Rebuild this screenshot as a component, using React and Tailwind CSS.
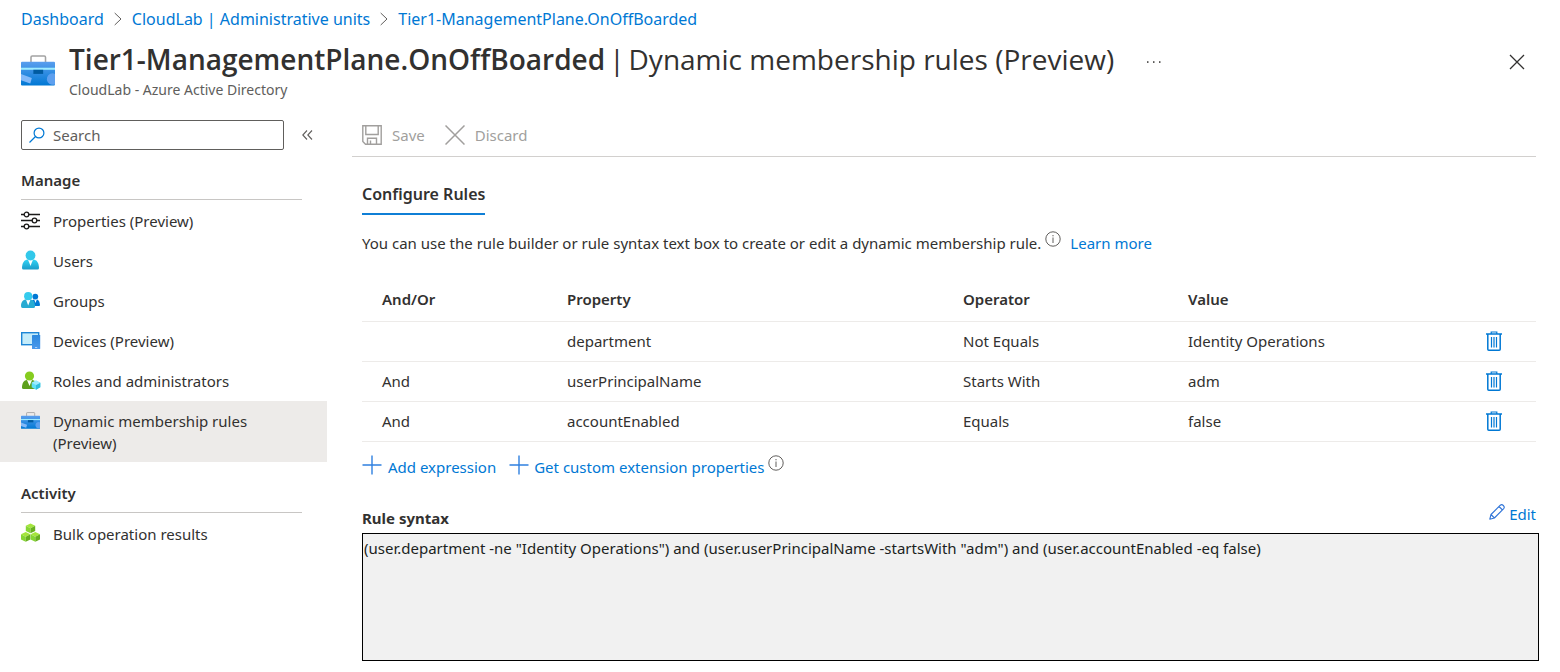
import React from 'react';

function Briefcase({ id, className }) {
  return (
    <svg className={className} viewBox="0 0 33 30" preserveAspectRatio="none" aria-hidden="true">
      <defs>
        <linearGradient id={id} x1="0" y1="0" x2="0" y2="1">
          <stop offset="0" stopColor="#5a9eee" />
          <stop offset="1" stopColor="#0078d4" />
        </linearGradient>
      </defs>
      <path d="M9.700 7V2.200A1.200 1.200 0 0 1 10.900 1H22.600A1.200 1.200 0 0 1 23.800 2.200V7" fill="none" stroke="#a3a3a3" strokeWidth="1.500" />
      <path d="M0 7.500A1 1 0 0 1 1 6.500H32A1 1 0 0 1 33 7.500V28.500A1 1 0 0 1 32 29.500H1A1 1 0 0 1 0 28.500Z" fill={`url(#${id})`} />
      <rect y="12.300" width="33" height="2" fill="#9cebff" />
      <rect x="12" y="14.300" width="9.500" height="4" fill="#005ba1" />
      <path d="M0 18.500L10.500 22.300L9 27.600L0 24.500Z" fill="#83b9f9" />
      <path d="M33 18.300A5.500 5.500 0 1 0 30 28.700H33Z" fill="#5ea0ef" />
    </svg>
  );
}

function PropertiesIcon() {
  return (
    <svg className="size-5" viewBox="0 0 20 20" fill="none" stroke="#1b1a19" strokeWidth="1.300" aria-hidden="true">
      <path d="M0 4.500H3M8 4.500H19M0 10.500H11M16 10.500H19M0 16.500H3M8 16.500H19" />
      <circle cx="5.500" cy="4.500" r="2.300" />
      <circle cx="13.500" cy="10.500" r="2.300" />
      <circle cx="5.500" cy="16.500" r="2.300" />
    </svg>
  );
}

function UserIcon() {
  return (
    <svg className="size-5" viewBox="0 0 20 20" aria-hidden="true">
      <defs>
        <linearGradient id="user" x1="0" y1="0" x2="0" y2="1">
          <stop offset="0" stopColor="#32d4f5" />
          <stop offset="1" stopColor="#1b9cc9" />
        </linearGradient>
      </defs>
      <path d="M1 18C1 13 3.500 9.500 6.500 9.500H12.500C15.500 9.500 18 13 18 18Q18 19.500 16.500 19.500H2.500Q1 19.500 1 18Z" fill="url(#user)" />
      <path d="M7 9.500H12L9.500 16Z" fill="#fff" />
      <circle cx="9.500" cy="5.500" r="4.900" fill="#32c8ea" />
    </svg>
  );
}

function GroupsIcon() {
  return (
    <svg className="size-5" viewBox="0 0 20 20" aria-hidden="true">
      <path d="M10 16V12Q11 9.500 13 9.500H16Q18.500 10 19 15Q19 16 18 16Z" fill="#0078d4" />
      <path d="M13 9H16L14.500 13Z" fill="#fff" />
      <circle cx="14.300" cy="6.600" r="2.900" fill="#0078d4" />
      <path d="M0 16C0 12 2 9.500 5 9.500H9.500C12.500 9.500 14 12.500 14 16.500Q14 18 12.500 18H1.500Q0 18 0 16Z" fill="#27abd2" />
      <path d="M5 9.500H9.500L7.200 15.500Z" fill="#fff" />
      <circle cx="7.200" cy="6.200" r="4.100" fill="#35cbed" />
    </svg>
  );
}

function DevicesIcon() {
  return (
    <svg className="size-5" viewBox="0 0 20 20" aria-hidden="true">
      <defs>
        <linearGradient id="phone" x1="0" y1="0" x2="0" y2="1">
          <stop offset="0" stopColor="#2b88de" />
          <stop offset="1" stopColor="#4a99ec" />
        </linearGradient>
      </defs>
      <rect x=".7" y="2.700" width="17" height="12" fill="#c5ecfa" stroke="#1d86d6" strokeWidth="1.400" />
      <rect x="11" y="5" width="8.200" height="14" rx=".6" fill="url(#phone)" />
      <rect x="14" y="17" width="2.200" height="1" fill="#a9d0f7" />
    </svg>
  );
}

function RolesIcon() {
  return (
    <svg className="size-5" viewBox="0 0 20 20" aria-hidden="true">
      <path d="M1 17.500C1 13 3 10 6 10H11C14 10 16 13 16 17.500Q16 19 14.500 19H2.500Q1 19 1 17.500Z" fill="#5da01c" />
      <path d="M6 10H11L8.500 16Z" fill="#fff" />
      <circle cx="8.500" cy="6" r="4.600" fill="#86cc1f" />
      <path d="M15 10.500L19.300 12.800V17.300L15 19.800L10.700 17.300V12.800Z" fill="#5fe0f7" />
      <path d="M15 15L19.300 12.800V17.300L15 19.800Z" fill="#32bedd" />
      <path d="M15 10.500L19.300 12.800L15 15L10.700 12.800Z" fill="#9cebff" />
    </svg>
  );
}

function Cube({ x, y }) {
  return (
    <g transform={`translate(${x} ${y})`}>
      <path d="M4.700 0L9.400 2.300L4.700 4.800L0 2.300Z" fill="#a4e53c" />
      <path d="M0 2.300L4.700 4.800V9.800L0 7.400Z" fill="#86d633" />
      <path d="M9.400 2.300L4.700 4.800V9.800L9.400 7.400Z" fill="#67b01f" />
    </g>
  );
}

function CubesIcon() {
  return (
    <svg className="size-5" viewBox="0 0 20 20" aria-hidden="true">
      <Cube x="4.800" y=".5" />
      <Cube x="0" y="9" />
      <Cube x="9.600" y="9" />
    </svg>
  );
}

function SmallBriefcase() {
  return (
    <span className="flex size-5 items-center">
      <Briefcase id="case-small" className="h-[17px] w-[19px]" />
    </span>
  );
}

function InfoIcon() {
  return (
    <svg className="size-4 shrink-0" viewBox="0 0 16 16" fill="none" stroke="#605e5c" role="img" aria-label="More information">
      <circle cx="8" cy="8" r="7.200" />
      <path d="M8 6.500V12M8 4V5.300" />
    </svg>
  );
}

function TrashIcon() {
  return (
    <svg className="h-5 w-4" viewBox="0 0 16 20" fill="none" stroke="#0078d4" aria-hidden="true">
      <path d="M0 3H16" strokeWidth="1.500" />
      <path d="M5.200 3V1H10.800V3" strokeWidth="1.200" />
      <path d="M1.800 3V18.200A1 1 0 0 0 2.800 19.200H13.200A1 1 0 0 0 14.200 18.200V3" strokeWidth="1.500" />
      <path d="M5.500 6V16.500M8 6V16.500M10.500 6V16.500" strokeWidth="1.200" />
    </svg>
  );
}

function PlusIcon() {
  return (
    <svg className="size-5" viewBox="0 0 20 20" fill="none" stroke="#2f80e0" strokeWidth="1.400" aria-hidden="true">
      <path d="M10 .5V19.500M.5 10H19.500" />
    </svg>
  );
}

function Crumb({ children, last }) {
  return (
    <li className="flex items-center">
      <a href="#" className="text-[#0078d4]">{children}</a>
      {!last && (
        <svg className="mx-[10px] h-3.5 w-2" viewBox="0 0 8 14" fill="none" stroke="#605e5c" aria-hidden="true">
          <path d="M.7 1L7 7L.7 13" />
        </svg>
      )}
    </li>
  );
}

function NavItem({ icon: Icon, label, selected }) {
  return (
    <li>
      <a
        href="#"
        aria-current={selected ? 'page' : undefined}
        className={`flex min-h-10 gap-3 pt-[9px] pr-12 pb-2 pl-[21px] leading-[22px] ${selected ? 'bg-[#edebe9]' : ''}`}
      >
        <span className="shrink-0">
          <Icon />
        </span>
        <span>{label}</span>
      </a>
    </li>
  );
}

function NavGroup({ title, items }) {
  return (
    <section>
      <h2 className="mr-[25px] ml-[21px] border-b border-[#c8c6c4] pb-2 leading-[22px] font-semibold">{title}</h2>
      <ul className="pt-px">
        {items.map((item) => (
          <NavItem key={item.label} {...item} />
        ))}
      </ul>
    </section>
  );
}

const manage = [
  { icon: PropertiesIcon, label: 'Properties (Preview)' },
  { icon: UserIcon, label: 'Users' },
  { icon: GroupsIcon, label: 'Groups' },
  { icon: DevicesIcon, label: 'Devices (Preview)' },
  { icon: RolesIcon, label: 'Roles and administrators' },
  { icon: SmallBriefcase, label: 'Dynamic membership rules (Preview)', selected: true },
];

const activity = [{ icon: CubesIcon, label: 'Bulk operation results' }];

const rules = [
  ['', 'department', 'Not Equals', 'Identity Operations'],
  ['And', 'userPrincipalName', 'Starts With', 'adm'],
  ['And', 'accountEnabled', 'Equals', 'false'],
];

export default function App() {
  return (
    <div className="bg-white font-['Noto_Sans','Open_Sans',sans-serif] text-[15px] text-[#323130]">
      <nav aria-label="Breadcrumb" className="px-[21px] pt-[7px]">
        <ol className="flex text-base leading-6">
          <Crumb>Dashboard</Crumb>
          <Crumb>CloudLab | Administrative units</Crumb>
          <Crumb last>Tier1-ManagementPlane.OnOffBoarded</Crumb>
        </ol>
      </nav>

      <header className="flex items-start pt-2 pr-[34px] pl-[21px]">
        <Briefcase id="case-large" className="mt-4 mr-[14px] h-[31px] w-[34px] shrink-0" />
        <div>
          <h1 className="flex gap-1 font-['Open_Sans','Noto_Sans',sans-serif] text-[28px] leading-10 font-semibold">
            <span>Tier1-ManagementPlane.OnOffBoarded</span>
            <span className="font-normal">|</span>
            <span className="font-normal">Dynamic membership rules (Preview)</span>
          </h1>
          <p className="pt-px text-sm leading-5 text-[#605e5c]">CloudLab - Azure Active Directory</p>
        </div>
        <button type="button" aria-label="More actions" className="mt-[18px] ml-8 flex h-[10px] items-center">
          <svg className="h-1 w-4" viewBox="0 0 16 4" fill="#323130" aria-hidden="true">
            <rect x="1" y="1.300" width="1.500" height="1.500" />
            <rect x="7" y="1.300" width="1.500" height="1.500" />
            <rect x="13" y="1.300" width="1.500" height="1.500" />
          </svg>
        </button>
        <button type="button" aria-label="Close" className="mt-[14px] ml-auto flex size-[18px] items-center justify-center">
          <svg className="size-4" viewBox="0 0 16 16" fill="none" stroke="#323130" strokeWidth="1.300" aria-hidden="true">
            <path d="M1 1L15 15M15 1L1 15" />
          </svg>
        </button>
      </header>

      <div className="flex pt-5">
        <aside className="w-[327px] shrink-0">
          <div className="flex items-center gap-[18px] pb-[19px] pl-[21px]">
            <label className="flex h-[30px] w-[263px] items-center gap-2 rounded-xs border border-[#605e5c] px-[7px]">
              <svg className="size-4 shrink-0" viewBox="0 0 16 16" fill="none" stroke="#0078d4" strokeWidth="1.200" aria-hidden="true">
                <circle cx="10" cy="6" r="4.900" />
                <path d="M6.500 9.500L.5 15.500" />
              </svg>
              <input type="text" aria-label="Search" placeholder="Search" className="w-full min-w-0 outline-none placeholder:text-[#605e5c]" />
            </label>
            <button type="button" aria-label="Collapse menu">
              <svg className="h-[10px] w-[11px]" viewBox="0 0 11 10" fill="none" stroke="#605e5c" strokeWidth="1.100" aria-hidden="true">
                <path d="M5 .5L.8 5L5 9.500M10 .5L5.800 5L10 9.500" />
              </svg>
            </button>
          </div>
          <NavGroup title="Manage" items={manage} />
          <div className="h-5" />
          <NavGroup title="Activity" items={activity} />
        </aside>

        <main className="min-w-0 flex-1 pr-6 pl-[25px]">
          <div className="flex gap-5 border-b border-[#d2d0ce] pb-1.5 pl-[10px] text-[#a19f9d]">
            <button type="button" disabled className="flex h-[30px] items-center gap-[10px]">
              <svg className="size-5" viewBox="0 0 20 20" fill="none" stroke="#a19f9d" strokeWidth="1.400" aria-hidden="true">
                <path d="M.8 .8H19.200V19.200H3.500L.8 16.500Z" />
                <path d="M3.800 .8V9.500H16.200V.8M5.500 19V13.200H14.500V19M8.500 19V15.500" />
              </svg>
              Save
            </button>
            <button type="button" disabled className="flex h-[30px] items-center gap-[10px]">
              <svg className="size-5" viewBox="0 0 20 20" fill="none" stroke="#a19f9d" strokeWidth="1.500" aria-hidden="true">
                <path d="M.5 .5L19.500 19.500M19.500 .5L.5 19.500" />
              </svg>
              Discard
            </button>
          </div>

          <div className="pt-[25px] pl-[10px]">
            <div role="tablist">
              <button type="button" role="tab" aria-selected="true" className="border-b-2 border-[#0f7fd6] pb-[7px] text-base leading-6 font-semibold">
                Configure Rules
              </button>
            </div>

            <div className="flex pt-4 leading-6">
              <p>You can use the rule builder or rule syntax text box to create or edit a dynamic membership rule.</p>
              <span className="ml-1 shrink-0">
                <InfoIcon />
              </span>
              <a href="#" className="ml-[9px] shrink-0 text-[#0078d4]">Learn more</a>
            </div>

            <table className="mt-[23px] w-full table-fixed border-collapse text-left">
              <thead>
                <tr className="h-[43px] border-b border-[#edebe9]">
                  <th scope="col" className="w-[205px] pl-5 font-semibold">And/Or</th>
                  <th scope="col" className="w-[396px] font-semibold">Property</th>
                  <th scope="col" className="w-[225px] font-semibold">Operator</th>
                  <th scope="col" className="font-semibold">Value</th>
                  <th scope="col" aria-label="Delete" className="w-[84px]" />
                </tr>
              </thead>
              <tbody>
                {rules.map(([join, property, operator, value]) => (
                  <tr key={property} className="h-10 border-b border-[#edebe9]">
                    <td className="pl-5">{join}</td>
                    <td>{property}</td>
                    <td>{operator}</td>
                    <td>{value}</td>
                    <td>
                      <button type="button" aria-label={`Delete ${property} rule`} className="mx-auto flex">
                        <TrashIcon />
                      </button>
                    </td>
                  </tr>
                ))}
              </tbody>
            </table>

            <div className="flex items-start gap-[13px] pt-[13px] leading-6 text-[#0078d4]">
              <button type="button" className="flex gap-[6px]">
                <PlusIcon />
                Add expression
              </button>
              <div className="flex">
                <button type="button" className="flex gap-[5px]">
                  <PlusIcon />
                  Get custom extension properties
                </button>
                <span className="ml-[3px]">
                  <InfoIcon />
                </span>
              </div>
            </div>

            <div className="flex items-end justify-between pt-[23px] pb-[3px] leading-6">
              <label htmlFor="rule-syntax" className="font-bold">Rule syntax</label>
              <button type="button" className="mb-1 flex gap-1 text-[#0078d4]">
                <svg className="mt-0.5 size-4" viewBox="0 0 16 16" fill="none" stroke="#2f74d8" strokeWidth="1.100" strokeLinejoin="round" aria-hidden="true">
                  <path d="M.8 15.200L2 10.500L11.300 1.200Q12.800 0 14.300 1.500Q16 3.200 14.700 4.700L5.400 14L.8 15.200ZM2 10.500L5.400 14M10 2.500L13.500 6" />
                </svg>
                Edit
              </button>
            </div>
          </div>
          <div className="-mr-[3px] pl-[10px]">
            <textarea
              id="rule-syntax"
              readOnly
              className="block h-32 w-full resize-none border border-black bg-[#f1f1f1] px-px py-[3px] leading-[22px] text-[#201f1e] outline-none"
              value={'(user.department -ne "Identity Operations") and (user.userPrincipalName -startsWith "adm") and (user.accountEnabled -eq false)'}
            />
          </div>
        </main>
      </div>
    </div>
  );
}
